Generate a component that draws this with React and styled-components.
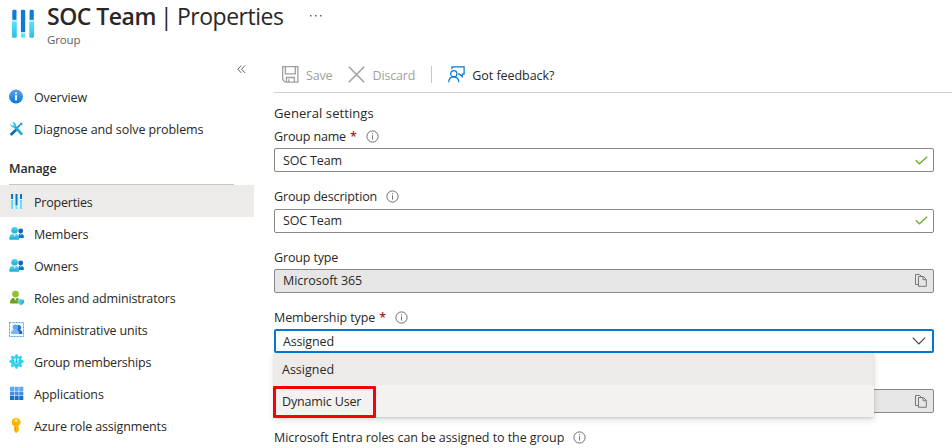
import React from "react";
import styled, { createGlobalStyle, css } from "styled-components";

const GlobalStyle = createGlobalStyle`
  * { box-sizing: border-box; }
  html, body { margin: 0; background: #fff; overflow: hidden; }
  body { font-family: "Open Sans", "Noto Sans", sans-serif; font-size: 12.5px; color: #292827; }
  svg { display: block; flex: none; }
`;

const Page = styled.div`
  width: 952px;
  height: 448px;
  overflow: hidden;
  display: flex;
  flex-direction: column;
`;

const Text = styled.span`
  white-space: nowrap;
  letter-spacing: ${(p) => p.$spacing ?? -0.15}px;
`;

const Header = styled.header`
  height: 60px;
  display: flex;
  align-items: flex-start;
  padding-left: 11px;
`;

const LogoBox = styled.div`
  width: 36px;
  padding-top: 9px;
`;

const Heading = styled.div`
  display: flex;
  flex-direction: column;
`;

const TitleRow = styled.h1`
  margin: 0;
  height: 32px;
  display: flex;
  align-items: center;
  line-height: 32px;
  font-size: 23px;
  font-weight: 400;
`;

const TitleName = styled(Text)`
  width: 110px;
  font-weight: 600;
`;

const TitleBar = styled.span`
  width: 20px;
  padding-left: 3px;
`;

const TitlePage = styled(Text)`
  width: 133px;
`;

const Subtitle = styled(Text)`
  line-height: 16px;
  font-size: 11.5px;
  color: #605e5c;
`;

const Body = styled.div`
  flex: 1;
  display: flex;
  min-height: 0;
`;

const Sidebar = styled.nav`
  width: 254px;
  flex: none;
`;

const CollapseRow = styled.div`
  height: 21px;
  padding: 5px 0 0 237px;
`;

const NavItem = styled.a`
  height: 32px;
  display: flex;
  align-items: center;
  gap: 9px;
  padding: ${(p) => p.$drop ?? 0}px 0 0 9px;
  background: ${(p) => (p.$active ? "#edebe9" : "transparent")};
`;

const NavHeading = styled.h2`
  margin: 0 20px 0 9px;
  height: 40px;
  padding-top: 8px;
  line-height: 31px;
  font-size: 12.5px;
  font-weight: 600;
  border-bottom: 1px solid #c8c6c4;
`;

const Main = styled.main`
  width: 698px;
  padding-left: 20px;
`;

const Toolbar = styled.div`
  height: 33px;
  display: flex;
  align-items: center;
  padding: 0 0 3px 8px;
  border-bottom: 1px solid #d2d0ce;
`;

const Command = styled.button`
  display: flex;
  align-items: center;
  gap: 7px;
  padding: 0;
  border: 0;
  background: none;
  font: inherit;
  margin-right: ${(p) => p.$after ?? 0}px;
  color: ${(p) => (p.$disabled ? "#a19f9d" : "#292827")};
`;

const CommandText = styled(Text)`
  padding-top: 1px;
`;

const CommandDivider = styled.i`
  width: 1px;
  height: 17px;
  margin-right: 16px;
  background: #c8c6c4;
`;

const SectionTitle = styled.h3`
  margin: 0;
  height: 31px;
  padding-top: 9px;
  line-height: 23px;
  font-size: 13px;
  font-weight: 400;
`;

const Field = styled.div`
  position: relative;
  width: 660px;
  height: ${(p) => p.$height ?? 60}px;
  display: flex;
  flex-direction: column;
`;

const Label = styled.label`
  flex: 1;
  display: flex;
  align-items: flex-end;
  padding-bottom: ${(p) => p.$lift ?? 1}px;
  line-height: 20px;
`;

const Required = styled.span`
  margin-left: 4px;
  color: #a4262c;
  font-weight: 600;
`;

const InfoMark = styled.span`
  margin: 0 0 4px ${(p) => p.$gap ?? 9}px;
`;

const Box = styled.div`
  height: 24px;
  flex: none;
  display: flex;
  align-items: center;
  justify-content: space-between;
  padding: 0 5px ${(p) => p.$lift ?? 0}px 8px;
  border: 1px solid #8a8886;
  border-radius: 2px;
  background: ${(p) => (p.$readOnly ? "#e6e6e6" : "#fff")};
  ${(p) =>
    p.$readOnly &&
    css`
      padding-right: 6px;
    `}
  ${(p) =>
    p.$focused &&
    css`
      border: 2px solid #0078d4;
      padding: 0 6px 0 7px;
    `}
`;

const Menu = styled.ul`
  position: absolute;
  z-index: 2;
  top: 100%;
  left: 0;
  width: 600px;
  margin: 0;
  padding: 0;
  list-style: none;
  background: #f3f2f1;
  box-shadow: 0 3px 7px rgba(0, 0, 0, 0.13), 0 1px 2px rgba(0, 0, 0, 0.11);
`;

const Option = styled.li`
  height: 32px;
  display: flex;
  align-items: center;
  padding-left: 8px;
  background: ${(p) => (p.$selected ? "#edebe9" : "#f3f2f1")};
`;

const Highlight = styled.div`
  position: absolute;
  left: -1px;
  top: 33px;
  width: 103px;
  height: 32px;
  border: 3px solid #f80008;
  border-radius: 1px;
`;

const Sliders = () => (
  <svg width="24" height="30" viewBox="0 0 24 30">
    <defs>
      <linearGradient id="cyanBar" x1="0" y1="0" x2="0" y2="1">
        <stop offset="0" stopColor="#50e6ff" />
        <stop offset="1" stopColor="#32bedd" />
      </linearGradient>
    </defs>
    {[1, 18.3].map((x) => (
      <g key={x}>
        <path d={`M${x + 0.3} 11V2q0-1.3 1.3-1.3h1.6q1.3 0 1.3 1.3v9z`} fill="#0f7bd4" />
        <path d={`M${x} 12.3h4.8V27.5q0 1.3-1.3 1.3h-2.2Q${x} 28.8 ${x} 27.5z`} fill="url(#cyanBar)" />
        <rect x={x - 0.1} y="10.8" width="5" height="1.5" fill="#e4e6e8" />
      </g>
    ))}
    <path d="M9.9 23V2q0-1.3 1.3-1.3h1.7q1.3 0 1.3 1.3v21z" fill="#0f7bd4" />
    <rect x="9.4" y="23" width="5.2" height="1.5" fill="#dfe3e6" />
    <path d="M9.9 24.6h4.3v2.9q0 1.3-1.3 1.3h-1.7q-1.3 0-1.3-1.3z" fill="#50e6ff" />
  </svg>
);

const OverviewIcon = () => (
  <svg width="16" height="16" viewBox="0 0 16 16">
    <defs>
      <linearGradient id="infoBlue" x1="0" y1="0" x2="0" y2="1">
        <stop stopColor="#5ea0ef" />
        <stop offset=".5" stopColor="#328ee3" />
        <stop offset="1" stopColor="#0078d4" />
      </linearGradient>
    </defs>
    <circle cx="7" cy="7.6" r="7" fill="url(#infoBlue)" />
    <circle cx="7" cy="4.2" r="1" fill="#fff" />
    <rect x="6.1" y="6.1" width="1.8" height="5.3" rx=".4" fill="#fff" />
  </svg>
);

const ToolsIcon = () => (
  <svg width="16" height="16" viewBox="0 0 16 16">
    <path d="M12.5 2.2 7.2 7.9" stroke="#0078d4" strokeWidth="1.4" />
    <path d="m12 1.2 1.9 1.5-1.1 1.9-1.9-1.1z" fill="#35add9" />
    <path d="M6.6 7.4 8.6 9.2l-5.2 5.1q-.9.8-1.9-.2-.8-.9 0-1.8z" fill="#0a69ac" />
    <path d="M5.8 5.5 12.4 12.8" stroke="#20aedb" strokeWidth="2.7" strokeLinecap="round" />
    <path d="M1.3 3 3.6 5 5 3.5 3.2 1.3q2-.5 3.3 1 1 1.6.2 3.2Q5 7 3 6.3 1.2 5.2 1.3 3z" fill="#35cbed" />
  </svg>
);

const PeopleIcon = () => (
  <svg width="16" height="16" viewBox="0 0 16 16">
    <defs>
      <linearGradient id="person" x1="0" y1="0" x2="0" y2="1">
        <stop stopColor="#50d9f5" />
        <stop offset="1" stopColor="#20a8cf" />
      </linearGradient>
    </defs>
    <circle cx="11.7" cy="5" r="2.4" fill="#0b66bd" />
    <path d="M9 11.4 10.1 8q1.5-1.2 3.1 0Q15 9.2 15 11q0 .9-1 .9H9z" fill="#0c78d0" />
    <path d="m11.1 7.7.7 2 .8-2z" fill="#d5edfa" />
    <path d="M.2 12.7Q.1 9 3 7.9h4.8q2.5 1.2 2.5 4.8 0 1-1 1H1.2q-1 0-1-1z" fill="url(#person)" />
    <path d="m4.2 7.5 1.3 3.3L7 7.5z" fill="#e1faff" />
    <circle cx="5.6" cy="4.2" r="3.3" fill="url(#person)" />
  </svg>
);

const RolesIcon = () => (
  <svg width="16" height="16" viewBox="0 0 16 16">
    <path d="M1 13Q1 9.4 3.8 8h5q2.2 1 2.6 5.5H2q-1 0-1-.5z" fill="#69a31b" />
    <path d="m4.7 7.5 1.6 3.3L8 7.5z" fill="#e9f5d9" />
    <circle cx="6.5" cy="4.1" r="3.4" fill="#8bc42b" />
    <path d="M9 9.6q1.7-.2 3-.9 1.3.8 3 1v2.5q0 1.8-3 3.1-3-1.3-3-3.1z" fill="#50cbea" stroke="#c5eff8" strokeWidth=".4" />
    <path d="m12 12 3-2v2.4L12 15z" fill="#2eaecf" />
  </svg>
);

const UnitsIcon = () => (
  <svg width="16" height="16" viewBox="0 0 16 16">
    <rect x=".5" y=".5" width="14" height="14" fill="#f3f9fe" stroke="#4ba1df" strokeDasharray="2 1" />
    <circle cx="9.5" cy="5.6" r="2.6" fill="#1677ce" />
    <path d="M7 11.9 9 7.8q4.6.4 4.4 3.3 0 .8-.8.8z" fill="#1266b9" />
    <circle cx="6.4" cy="5.2" r="2.7" fill="#63a5f1" />
    <path d="M2 11.2q0-3.2 3.2-4H7q3 .8 3.4 4 0 .8-.8.8H2.8q-.8 0-.8-.8z" fill="#7cb5f4" />
  </svg>
);

const GearIcon = () => (
  <svg width="16" height="16" viewBox="0 0 16 16">
    <g fill="#32d0f0">
      <circle cx="7.5" cy="7.5" r="5.4" />
      {[0, 45, 90, 135, 180, 225, 270, 315].map((a) => (
        <path key={a} transform={`rotate(${a} 7.5 7.5)`} d="m5.8 3 .7-2.5q1-.5 2 0L9.2 3z" />
      ))}
    </g>
    <circle cx="7.5" cy="7.5" r="3.6" fill="#c8f6fd" />
    <path d="M5 5.9a3 3 0 1 0 5 0M7.5 4v4.5" fill="none" stroke="#20c5e7" strokeWidth="1.3" />
    <circle cx="7.5" cy="8" r="1.2" fill="#20bddf" />
  </svg>
);

const GridIcon = () => (
  <svg width="16" height="16" viewBox="0 0 16 16">
    {["#61a5ef", "#3c8ee6", "#1473cd"].map((fill, r) =>
      [1, 5.6, 10.2].map((x) => (
        <rect key={x} x={x} y={0.8 + r * 4.6} width="4.1" height="4.1" rx=".3" fill={fill} />
      ))
    )}
  </svg>
);

const KeyIcon = () => (
  <svg width="16" height="16" viewBox="0 0 16 16">
    <path d="M7 0q4.4.2 4.7 4.2 0 2.3-2.4 3.8v.8l1 1-.9.9.9 1-1 1 .2.4L7 15.2 5.3 13V8.2Q2.6 6.9 2.6 4.2 3 0 7 0z" fill="#ffb900" />
    <circle cx="7.1" cy="2.6" r="1.3" fill="#fff2c5" />
    <path d="M6.2 8.8v4" stroke="#e78b00" strokeWidth=".9" />
    <path d="M4.7 6h5" stroke="#f39500" strokeWidth=".8" />
  </svg>
);

const CollapseIcon = () => (
  <svg width="9" height="9" viewBox="0 0 9 9" fill="none" stroke="#605e5c" strokeWidth="1">
    <path d="M4.3.5.8 4.2l3.5 3.7M8 .5 4.5 4.2 8 7.9" />
  </svg>
);

const SaveIcon = () => (
  <svg width="17" height="17" viewBox="0 0 17 17" fill="none" stroke="#a19f9d" strokeWidth="1.3">
    <path d="M.7.7h15.2v15.5H3.2L.7 13.8zM3.4.7v7.2h9.9V.7M4.4 16v-4.5h8V16M6.8 13.2V16" />
  </svg>
);

const DiscardIcon = () => (
  <svg width="17" height="17" viewBox="0 0 17 17" fill="none" stroke="#a19f9d" strokeWidth="1.5">
    <path d="m.8.8 15.4 15.4M16.2.8.8 16.2" />
  </svg>
);

const FeedbackIcon = () => (
  <svg width="17" height="17" viewBox="0 0 17 17" fill="none" stroke="#0078d4" strokeWidth="1.2">
    <path d="M3.9 3.3V.8h12.2v7.4h-1.9v2.5l-2.6-2.5H10" />
    <circle cx="5.8" cy="7.7" r="3.1" />
    <path d="M.7 16.2q.3-5.4 5.1-5.4t5.1 5.4" />
  </svg>
);

const InfoIcon = () => (
  <svg width="13" height="13" viewBox="0 0 13 13">
    <circle cx="6.5" cy="6.5" r="5.6" fill="none" stroke="#605e5c" strokeWidth=".9" />
    <path d="M6.5 5.3v4.3M6.5 3.2v1.1" stroke="#797775" strokeWidth="1" />
  </svg>
);

const CheckIcon = () => (
  <svg width="13" height="9" viewBox="0 0 13 9">
    <path d="m.7 4.2 3.6 3.6L12.2.7" fill="none" stroke="#6bb02c" strokeWidth="1.3" />
  </svg>
);

const CopyIcon = () => (
  <svg width="12" height="13" viewBox="0 0 12 13" fill="none" stroke="#797775" strokeWidth="1">
    <path d="M3.5 10.5h-3V.5h4l2 2" />
    <path d="M3.5 2.5h5l2.8 2.8v7H3.5zM8 2.7v3h3" />
  </svg>
);

const ChevronIcon = () => (
  <svg width="14" height="8" viewBox="0 0 14 8">
    <path d="m.7.7 6.2 6.2L13.1.7" fill="none" stroke="#484644" strokeWidth="1.2" />
  </svg>
);

const SmallSliders = () => (
  <svg width="16" height="16" viewBox="0 0 16 16">
    {[2, 11].map((x) => (
      <g key={x}>
        <path d={`M${x} 0h2v5h-2z`} fill="#0078d4" />
        <path d={`M${x} 6h2v9h-2z`} fill="#50e6ff" />
      </g>
    ))}
    <path d="M6.5 0h2v11.5h-2z" fill="#0078d4" />
    <path d="M6.5 12.5h2V15h-2z" fill="#50e6ff" />
  </svg>
);

const topItems = [
  { label: "Overview", Icon: OverviewIcon },
  { label: "Diagnose and solve problems", Icon: ToolsIcon, spacing: -0.08 },
];

const manageItems = [
  { label: "Properties", Icon: SmallSliders, spacing: -0.2 },
  { label: "Members", Icon: PeopleIcon, spacing: -0.2 },
  { label: "Owners", Icon: PeopleIcon },
  { label: "Roles and administrators", Icon: RolesIcon, spacing: -0.18 },
  { label: "Administrative units", Icon: UnitsIcon },
  { label: "Group memberships", Icon: GearIcon, spacing: -0.2 },
  { label: "Applications", Icon: GridIcon, spacing: -0.12 },
  { label: "Azure role assignments", Icon: KeyIcon },
];

const NavEntry = ({ item: { label, Icon, spacing }, active, drop }) => (
  <NavItem $active={active} $drop={drop}>
    <Icon />
    <Text $spacing={spacing}>{label}</Text>
  </NavItem>
);

const Info = ({ gap }) => (
  <InfoMark $gap={gap}>
    <InfoIcon />
  </InfoMark>
);

export default function App() {
  return (
    <Page>
      <GlobalStyle />
      <Header>
        <LogoBox>
          <Sliders />
        </LogoBox>
        <Heading>
          <TitleRow>
            <TitleName $spacing={-0.5}>SOC Team</TitleName>
            <TitleBar>|</TitleBar>
            <TitlePage $spacing={-0.5}>Properties</TitlePage>
            <svg width="12" height="2" viewBox="0 0 12 2" fill="#605e5c">
              <path d="M0 0h1.5v1.5H0zM5 0h1.5v1.5H5zM10 0h1.5v1.5H10z" />
            </svg>
          </TitleRow>
          <Subtitle>Group</Subtitle>
        </Heading>
      </Header>
      <Body>
        <Sidebar>
          <CollapseRow>
            <CollapseIcon />
          </CollapseRow>
          {topItems.map((item) => (
            <NavEntry key={item.label} item={item} />
          ))}
          <NavHeading>
            <Text $spacing={-0.1}>Manage</Text>
          </NavHeading>
          {manageItems.map((item, i) => (
            <NavEntry key={item.label} item={item} active={i === 0} drop={2} />
          ))}
        </Sidebar>
        <Main>
          <Toolbar>
            <Command $disabled $after={16}>
              <SaveIcon />
              <CommandText>Save</CommandText>
            </Command>
            <Command $disabled $after={16}>
              <DiscardIcon />
              <CommandText>Discard</CommandText>
            </Command>
            <CommandDivider />
            <Command>
              <FeedbackIcon />
              <CommandText $spacing={-0.05}>Got feedback?</CommandText>
            </Command>
          </Toolbar>
          <SectionTitle>
            <Text $spacing={0.08}>General settings</Text>
          </SectionTitle>
          <Field $height={48}>
            <Label>
              <Text>Group name</Text>
              <Required>*</Required>
              <Info />
            </Label>
            <Box>
              <Text>SOC Team</Text>
              <CheckIcon />
            </Box>
          </Field>
          <Field $height={61}>
            <Label $lift={2}>
              <Text>Group description</Text>
              <Info />
            </Label>
            <Box $lift={1}>
              <Text>SOC Team</Text>
              <CheckIcon />
            </Box>
          </Field>
          <Field>
            <Label>
              <Text>Group type</Text>
            </Label>
            <Box $readOnly $lift={1}>
              <Text $spacing={-0.05}>Microsoft 365</Text>
              <CopyIcon />
            </Box>
          </Field>
          <Field>
            <Label>
              <Text $spacing={-0.1}>Membership type</Text>
              <Required>*</Required>
              <Info />
            </Label>
            <Box $focused>
              <Text>Assigned</Text>
              <ChevronIcon />
            </Box>
            <Menu>
              <Option $selected>
                <Text $spacing={0}>Assigned</Text>
              </Option>
              <Option>
                <Text>Dynamic User</Text>
              </Option>
              <Highlight />
            </Menu>
          </Field>
          <Field>
            <Label />
            <Box $readOnly>
              <span />
              <CopyIcon />
            </Box>
          </Field>
          <Field $height={36}>
            <Label>
              <Text $spacing={-0.06}>Microsoft Entra roles can be assigned to the group</Text>
              <Info />
            </Label>
          </Field>
        </Main>
      </Body>
    </Page>
  );
}
